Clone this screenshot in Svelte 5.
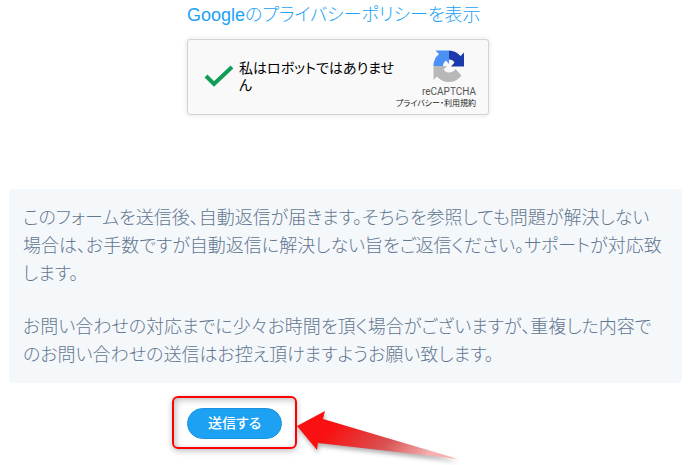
<script lang="ts">
	let verified = $state(true);

	const notes = [
		[
			'このフォームを送信後、自動返信が届きます。そちらを参照しても問題が解決しない',
			'場合は、お手数ですが自動返信に解決しない旨をご返信ください。サポートが対応致',
			'します。'
		],
		[
			'お問い合わせの対応までに少々お時間を頂く場合がございますが、重複した内容で',
			'のお問い合わせの送信はお控え頂けますようお願い致します。'
		]
	];
</script>

<form class="contact" onsubmit={(e) => e.preventDefault()}>
	<div class="field">
		<a class="policy" href="#privacy">Googleのプライバシーポリシーを表示</a>

		<div class="captcha">
			<label class="check">
				<input type="checkbox" bind:checked={verified} />
				<svg class="tick" class:off={!verified} viewBox="0 0 30 24" aria-hidden="true">
					<path d="M2 11 L10 19 L28 2" />
				</svg>
				<span>私はロボットではありませ<br />ん</span>
			</label>
			<div class="brand">
				<svg class="logo" viewBox="0 0 64 64" aria-hidden="true">
					<path fill="#1c3aa9" d="M62 33V5l-7 7A31 31 0 0 0 32 1v18c5 0 9 2 11 6l-7 8z" />
					<path fill="#4a90f5" d="M32 1H5l7 7A31 31 0 0 0 1 32h19c0-5 2-8 6-11l6 7z" />
					<path fill="#b8b8b8" d="M1 32v28l7-7A31 31 0 0 0 57 51L45 38c-3 5-8 7-13 7-5 0-8-2-11-6l7-7z" />
				</svg>
				<span class="name">reCAPTCHA</span>
				<span class="terms"><a href="#privacy">プライバシー</a>・<a href="#terms">利用規約</a></span>
			</div>
		</div>
	</div>

	<div class="notice">
		{#each notes as lines}
			<p>
				{#each lines as line, i}
					{#if i > 0}<br />{/if}{line}
				{/each}
			</p>
		{/each}
	</div>

	<div class="highlight">
		<button type="submit">送信する</button>
		<svg class="arrow" viewBox="0 0 172 60" aria-hidden="true">
			<defs>
				<linearGradient id="fade" x1="0" x2="1" y1="0" y2="0.3">
					<stop offset="0.3" stop-color="#f91010" />
					<stop offset="0.7" stop-color="#d95252" />
					<stop offset="1" stop-color="#f5b0b0" />
				</linearGradient>
			</defs>
			<path fill="url(#fade)" d="M2 22 L30 7 L28 15 L163 55 L23 39 L22 46 Z" />
		</svg>
	</div>
</form>

<style>
	:global(body) {
		margin: 0;
		background: #fff;
	}

	.contact {
		padding: 1px 8px 16px 9px;
		font-family: 'Liberation Sans', 'Noto Sans CJK JP', sans-serif;
		font-feature-settings: 'palt';
		font-weight: 300;
	}

	.field {
		display: flex;
		flex-direction: column;
		align-items: flex-start;
		gap: 10px;
		margin-left: 178px;
	}

	.policy {
		font-size: 18px;
		line-height: 28px;
		color: #1da1f2;
		text-decoration: none;
	}

	.captcha {
		display: flex;
		justify-content: space-between;
		box-sizing: border-box;
		width: 302px;
		min-height: 76px;
		padding: 0 12px 0 16px;
		border: 1px solid #d3d3d3;
		border-radius: 3px;
		background: #f9f9f9;
		box-shadow: 0 0 4px 1px rgba(0, 0, 0, 0.08);
	}

	.check {
		display: flex;
		align-items: center;
		gap: 5px;
		width: 188px;
		font-size: 14px;
		font-weight: 400;
		line-height: 17px;
		color: #000;
		white-space: nowrap;
	}

	.check input {
		position: absolute;
		opacity: 0;
	}

	.tick {
		flex: none;
		width: 30px;
		height: 24px;
		fill: none;
		stroke: #0f9d58;
		stroke-width: 4;
	}

	.tick.off {
		visibility: hidden;
	}

	.brand {
		display: flex;
		flex-direction: column;
		align-items: flex-end;
		padding-top: 10px;
		color: #555;
	}

	.logo {
		width: 32px;
		height: 32px;
		margin-right: 11px;
	}

	.name {
		margin-top: 3px;
		font-family: Roboto, sans-serif;
		font-size: 10px;
		font-weight: 400;
		line-height: 13px;
	}

	.terms {
		font-size: 8px;
		font-weight: 400;
		line-height: 12px;
		color: #222;
		white-space: nowrap;
	}

	.terms a {
		color: inherit;
		text-decoration: none;
	}

	.notice {
		display: flex;
		flex-direction: column;
		gap: 25px;
		margin-top: 74px;
		padding: 15px 14px 14px;
		border-radius: 4px;
		background: #f5f8fa;
		color: #627690;
		font-size: 18px;
		line-height: 28px;
	}

	.notice p {
		margin: 0;
	}

	.highlight {
		position: relative;
		width: fit-content;
		margin: 13px 0 0 163px;
		padding: 10px 13px 8px;
		border: 2px solid #f00;
		border-radius: 6px;
		box-shadow:
			0 2px 6px rgba(0, 0, 0, 0.25),
			inset 2px 2px 6px rgba(0, 0, 0, 0.25);
	}

	button {
		display: block;
		padding: 0 20px;
		border: 1px solid #1a94e0;
		border-radius: 16px;
		background: #1da1f2;
		color: #fff;
		font: inherit;
		font-size: 14px;
		font-weight: 500;
		line-height: 29px;
		cursor: pointer;
	}

	.arrow {
		position: absolute;
		top: 6px;
		left: 121px;
		width: 172px;
		height: 60px;
		filter: drop-shadow(1px 3px 2px rgba(0, 0, 0, 0.3));
	}
</style>
